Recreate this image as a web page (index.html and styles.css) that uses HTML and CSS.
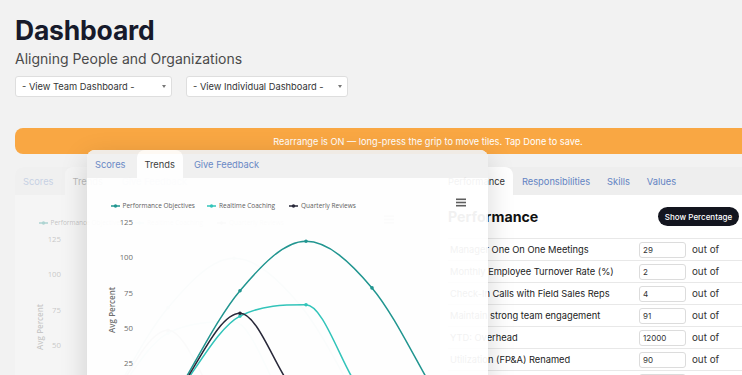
FILE: index.html
```html
<!DOCTYPE html>
<html lang="en">
<head>
<meta charset="utf-8">
<title>Dashboard</title>
<link rel="stylesheet" href="styles.css">
</head>
<body>
<div class="page">
  <h1 class="title">Dashboard</h1>
  <p class="subtitle">Aligning People and Organizations</p>
  <div class="filters">
    <div class="select team"><span>- View Team Dashboard -</span><span class="caret"></span></div>
    <div class="select indiv"><span>- View Individual Dashboard -</span><span class="caret"></span></div>
  </div>
  <div class="banner">Rearrange is ON — long-press the grip to move tiles. Tap Done to save.</div>

  <div class="tiles">
    <div class="tile ghost">
      <div class="tabbar">
        <div class="tab">Scores</div>
        <div class="tab active">Trends</div>
        <div class="tab">Give Feedback</div>
      </div>
      <div class="chart-body">
        <svg class="chart" width="401" height="250" viewBox="0 0 401 250">
          <g class="legend">
            <line x1="24" y1="28" x2="33" y2="28" class="c-po"/><circle cx="28.5" cy="28" r="1.7" class="f-po"/>
            <text x="35.5" y="30.3">Performance Objectives</text>
            <line x1="120" y1="28" x2="129" y2="28" class="c-rc"/><circle cx="124.5" cy="28" r="1.7" class="f-rc"/>
            <text x="132" y="30.3">Realtime Coaching</text>
            <line x1="202" y1="28" x2="211" y2="28" class="c-qr"/><circle cx="206.5" cy="28" r="1.7" class="f-qr"/>
            <text x="214" y="30.3">Quarterly Reviews</text>
          </g>
          <g class="menu"><rect x="369" y="20.5" width="10" height="1.6"/><rect x="369" y="23.7" width="10" height="1.6"/><rect x="369" y="26.9" width="10" height="1.6"/></g>
          <g class="ticks">
            <text x="46" y="47">125</text>
            <text x="46" y="82.3">100</text>
            <text x="46" y="117.7">75</text>
            <text x="46" y="153">50</text>
            <text x="46" y="188.3">25</text>
            <text x="46" y="223.6">0</text>
          </g>
          <text class="axis-title" transform="translate(28 132) rotate(-90)">Avg Percent</text>
          <path class="c-po line" d="M87,220 C109,184.2 131,138.8 153,112.7 C175,86.6 197,63.3 219,63.3 C241,63.3 263,83.8 285,109.9 C307,136 329,183.3 351,220"/>
          <path class="c-rc line" d="M87,220 C109,192.7 131,149.4 153,138.1 C175,126.8 197,126.8 219,126.8 C241,126.8 263,220 285,220 C307,220 329,220 351,220"/>
          <path class="c-qr line" d="M87,220 C109,191.8 131,135.3 153,135.3 C175,135.3 197,220 219,220 C241,220 329,220 351,220"/>
          <circle cx="153" cy="112.7" r="1.8" class="f-po"/><circle cx="219" cy="63.3" r="1.8" class="f-po"/><circle cx="285" cy="109.9" r="1.8" class="f-po"/>
          <circle cx="153" cy="138.1" r="1.8" class="f-rc"/><circle cx="219" cy="126.8" r="1.8" class="f-rc"/>
          <circle cx="153" cy="135.3" r="1.8" class="f-qr"/>
        </svg>
      </div>
    </div>

    <div class="tile perf">
      <div class="tabbar">
        <div class="tab active">Performance</div>
        <div class="tab">Responsibilities</div>
        <div class="tab">Skills</div>
        <div class="tab">Values</div>
      </div>
      <div class="perf-body">
        <div class="perf-head">
          <h2 class="perf-title">Performance</h2>
          <button class="btn">Show Percentage</button>
        </div>
        <div class="rows">
          <div class="row"><span class="label">Manager One On One Meetings</span><span class="input">29</span><span class="outof">out of</span></div>
          <div class="row"><span class="label">Monthly Employee Turnover Rate (%)</span><span class="input">2</span><span class="outof">out of</span></div>
          <div class="row"><span class="label">Check-In Calls with Field Sales Reps</span><span class="input">4</span><span class="outof">out of</span></div>
          <div class="row"><span class="label">Maintain strong team engagement</span><span class="input">91</span><span class="outof">out of</span></div>
          <div class="row"><span class="label">YTD: Overhead</span><span class="input">12000</span><span class="outof">out of</span></div>
          <div class="row"><span class="label">Utilization (FP&amp;A) Renamed</span><span class="input">90</span><span class="outof">out of</span></div>
          <div class="row"><span class="label">Customer Retention</span><span class="input">85</span><span class="outof">out of</span></div>
        </div>
      </div>
    </div>

    <div class="tile float">
      <div class="tabbar">
        <div class="tab">Scores</div>
        <div class="tab active">Trends</div>
        <div class="tab">Give Feedback</div>
      </div>
      <div class="chart-body">
        <svg class="chart" width="401" height="250" viewBox="0 0 401 250">
          <g class="legend">
            <line x1="24" y1="28" x2="33" y2="28" class="c-po"/><circle cx="28.5" cy="28" r="1.7" class="f-po"/>
            <text x="35.5" y="30.3">Performance Objectives</text>
            <line x1="120" y1="28" x2="129" y2="28" class="c-rc"/><circle cx="124.5" cy="28" r="1.7" class="f-rc"/>
            <text x="132" y="30.3">Realtime Coaching</text>
            <line x1="202" y1="28" x2="211" y2="28" class="c-qr"/><circle cx="206.5" cy="28" r="1.7" class="f-qr"/>
            <text x="214" y="30.3">Quarterly Reviews</text>
          </g>
          <g class="menu"><rect x="369" y="20.5" width="10" height="1.6"/><rect x="369" y="23.7" width="10" height="1.6"/><rect x="369" y="26.9" width="10" height="1.6"/></g>
          <g class="ticks">
            <text x="46" y="47">125</text>
            <text x="46" y="82.3">100</text>
            <text x="46" y="117.7">75</text>
            <text x="46" y="153">50</text>
            <text x="46" y="188.3">25</text>
            <text x="46" y="223.6">0</text>
          </g>
          <text class="axis-title" transform="translate(28 132) rotate(-90)">Avg Percent</text>
          <path class="c-po line" d="M87,220 C109,184.2 131,138.8 153,112.7 C175,86.6 197,63.3 219,63.3 C241,63.3 263,83.8 285,109.9 C307,136 329,183.3 351,220"/>
          <path class="c-rc line" d="M87,220 C109,192.7 131,149.4 153,138.1 C175,126.8 197,126.8 219,126.8 C241,126.8 263,220 285,220 C307,220 329,220 351,220"/>
          <path class="c-qr line" d="M87,220 C109,191.8 131,135.3 153,135.3 C175,135.3 197,220 219,220 C241,220 329,220 351,220"/>
          <circle cx="153" cy="112.7" r="1.8" class="f-po"/><circle cx="219" cy="63.3" r="1.8" class="f-po"/><circle cx="285" cy="109.9" r="1.8" class="f-po"/>
          <circle cx="153" cy="138.1" r="1.8" class="f-rc"/><circle cx="219" cy="126.8" r="1.8" class="f-rc"/>
          <circle cx="153" cy="135.3" r="1.8" class="f-qr"/>
        </svg>
      </div>
    </div>
  </div>
</div>
</body>
</html>
```

FILE: styles.css
```css
html, body {
  margin: 0;
  background: #f2f2f2;
  overflow: hidden;
}

body {
  font-family: Inter, "Noto Sans", sans-serif;
  color: #222;
}

.page {
  width: 826px;
  padding: 15px 0 0 15px;
}

.title {
  margin: 0;
  font-size: 26.5px;
  line-height: 31px;
  font-weight: 700;
  color: #171a2b;
  letter-spacing: -0.2px;
}

.subtitle {
  margin: 4px 0 0;
  font-size: 14px;
  line-height: 18px;
  color: #4a4a4a;
}

.filters {
  display: flex;
  gap: 14px;
  margin-top: 8px;
}

.select {
  box-sizing: border-box;
  height: 21px;
  background: #fff;
  border: 1px solid #dedede;
  border-radius: 3px;
  display: flex;
  align-items: center;
  justify-content: space-between;
  padding: 0 5px 0 6px;
  font-size: 9.3px;
  color: #333;
}

.select.team { width: 157px; }
.select.indiv { width: 162px; }

.caret {
  width: 0;
  height: 0;
  border-left: 2.5px solid transparent;
  border-right: 2.5px solid transparent;
  border-top: 3px solid #777;
}

.banner {
  margin-top: 31px;
  height: 26px;
  background: #f9a743;
  border-radius: 8px;
  color: #fff;
  font-size: 9.2px;
  display: flex;
  align-items: center;
  justify-content: center;
}

.tiles {
  position: relative;
  display: grid;
  grid-template-columns: 401px 401px;
  gap: 24px;
  margin-top: 13px;
}

.tile {
  background: #fff;
  border-radius: 8px;
  overflow: hidden;
  height: 260px;
}

.tabbar {
  display: flex;
  gap: 3px;
  height: 28px;
  background: #eeeeee;
}

.tab {
  padding: 0 8px;
  display: flex;
  align-items: center;
  font-size: 9.3px;
  color: #6283c3;
}

.tab.active {
  background: #fff;
  color: #333;
  border-radius: 8px 8px 0 0;
}

.perf .tabbar {
  gap: 1px;
}

.ghost {
  opacity: 0.3;
}

.float {
  position: absolute;
  left: 72px;
  top: -17px;
  width: 401px;
  opacity: 0.94;
  box-shadow: 0 8px 28px rgba(0, 0, 0, 0.16);
}

.float .tabbar {
  background: #f0f0f0;
}

.chart {
  display: block;
  font-family: "Open Sans", "Noto Sans", sans-serif;
}

.legend text {
  font-size: 6.5px;
  fill: #555;
}

.ticks text {
  font-size: 7.8px;
  fill: #666;
  text-anchor: end;
}

.axis-title {
  font-size: 8px;
  font-weight: 600;
  fill: #666;
  text-anchor: middle;
}

.menu rect {
  fill: #555;
}

.line {
  fill: none;
  stroke-width: 1.5;
}

.legend line {
  stroke-width: 1.5;
}

.c-po { stroke: #14908a; }
.c-rc { stroke: #27c2b7; }
.c-qr { stroke: #1c1c2e; }
.f-po { fill: #14908a; }
.f-rc { fill: #27c2b7; }
.f-qr { fill: #1c1c2e; }

.perf-body {
  padding: 12px 8px 0;
}

.perf-head {
  width: 291px;
  display: flex;
  align-items: center;
  justify-content: space-between;
  height: 19px;
}

.perf-title {
  margin: 0;
  font-size: 14.2px;
  font-weight: 700;
  color: #111;
  line-height: 19px;
}

.btn {
  height: 19px;
  width: 81px;
  padding: 0;
  border: 0;
  border-radius: 10px;
  background: #13151f;
  color: #fff;
  font-family: Inter, "Noto Sans", sans-serif;
  font-size: 8px;
  font-weight: 500;
}

.rows {
  margin-top: 12px;
}

.row {
  display: flex;
  align-items: center;
  height: 22px;
  border-top: 1px solid #e8e8e8;
  box-sizing: border-box;
  font-size: 9.3px;
  color: #222;
}

.label {
  width: 189px;
  padding-left: 2px;
  flex: none;
}

.input {
  box-sizing: border-box;
  width: 47px;
  height: 16px;
  border: 1px solid #dcdcdc;
  border-radius: 3px;
  font-size: 8px;
  padding-left: 3px;
  display: flex;
  align-items: center;
  color: #333;
  flex: none;
}

.outof {
  margin-left: 6px;
  color: #333;
  white-space: nowrap;
  font-size: 9.8px;
}
```
